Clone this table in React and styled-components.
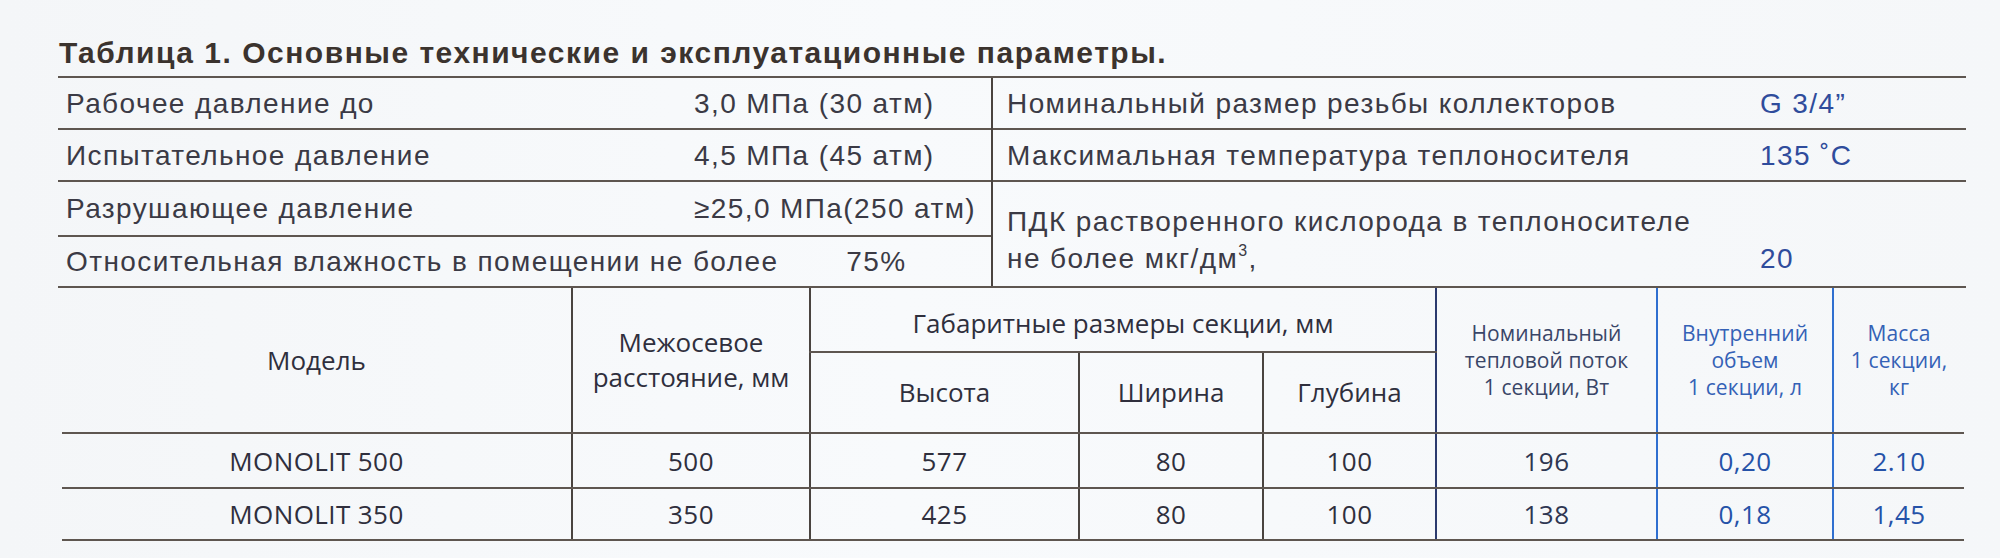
import React from 'react'
import styled, { createGlobalStyle } from 'styled-components'

const GlobalStyle = createGlobalStyle`
    html, body {
        margin: 0;
        padding: 0;
        background: #f6f8fa;
    }
`

const Sheet = styled.div`
    width: 2000px;
    height: 558px;
    box-sizing: border-box;
    padding: 35px 0 0 58px;
    background: linear-gradient(90deg, #f4f6f8 0%, #f8fafc 45%, #f5f7f9 100%);
    overflow: hidden;
`

const Title = styled.h2`
    margin: 0 0 5px 1px;
    font-family: 'Liberation Sans', Arial, sans-serif;
    font-weight: 700;
    font-size: 30px;
    line-height: 36px;
    letter-spacing: 1.5px;
    color: #3b332e;
`

const Params = styled.div`
    display: flex;
    width: 1908px;
    border-top: 2px solid #5e5650;
    border-bottom: 2px solid #5e5650;
`

const ParamColumn = styled.div`
    display: flex;
    flex-direction: column;
    width: ${p => p.$width}px;
    border-left: ${p => (p.$divided ? '2px solid #4a4440' : 'none')};
`

const ParamRow = styled.div`
    display: flex;
    align-items: ${p => (p.$bottom ? 'flex-end' : 'center')};
    box-sizing: border-box;
    height: ${p => p.$height}px;
    padding-left: ${p => p.$indent}px;
    padding-bottom: ${p => (p.$bottom ? 9 : 0)}px;
    border-bottom: ${p => (p.$last ? 'none' : '2px solid #5e5650')};
    font-family: 'Liberation Sans', Arial, sans-serif;
    font-size: 28px;
    line-height: 37px;
    letter-spacing: 1.4px;
    color: #3b3a45;
`

const ParamLabel = styled.div`
    flex: none;
    width: ${p => (p.$width ? `${p.$width}px` : 'auto')};
    white-space: nowrap;
`

const ParamValue = styled.div`
    flex: none;
    padding-left: ${p => p.$pad || 0}px;
    white-space: nowrap;
    color: ${p => (p.$accent ? '#2f4c9c' : 'inherit')};
`

const Sup = styled.sup`
    font-size: 16px;
    vertical-align: 12px;
    line-height: 0;
`

const Specs = styled.table`
    width: 1902px;
    margin-left: 4px;
    border-collapse: collapse;
    table-layout: fixed;
    font-family: 'Open Sans', 'Noto Sans', sans-serif;
    color: #2f2f3d;
`

const Head = styled.th`
    font-weight: 400;
    font-size: ${p => (p.$small ? 21 : 26)}px;
    line-height: ${p => (p.$small ? 27 : 35)}px;
    color: ${p => p.$tone || '#2f2f3d'};
    text-align: center;
    vertical-align: middle;
    padding: ${p => (p.$pushDown ? '8px 0 0' : '0')};
    border-left: ${p => (p.$edge ? `2px solid ${p.$edge}` : 'none')};
    border-bottom: 2px solid #5e5650;
    letter-spacing: ${p => (p.$small ? '0.1px' : '0')};
`

const HeadRow = styled.tr`
    height: ${p => p.$height}px;
`

const Cell = styled.td`
    font-size: 26px;
    line-height: 30px;
    color: ${p => p.$tone || '#2f2f3d'};
    text-align: center;
    vertical-align: middle;
    padding: 0;
    border-left: ${p => (p.$edge ? `2px solid ${p.$edge}` : 'none')};
    border-bottom: 2px solid #5e5650;
    letter-spacing: 0.4px;
`

const DataRow = styled.tr`
    height: ${p => p.$height}px;
`

const leftParams = [
    { label: 'Рабочее давление до', value: '3,0 МПа (30 атм)', height: 52 },
    { label: 'Испытательное давление', value: '4,5 МПа (45 атм)', height: 52 },
    { label: 'Разрушающее давление', value: '≥25,0 МПа(250 атм)', height: 55 },
    { label: 'Относительная влажность в помещении не более', value: '75%', height: 49, pad: 68 },
]

const GRAY = '#4a4440'
const NAVY = '#2b3a6e'
const BLUE = '#2f6fd0'

const columns = [510, 238, 269, 184, 173, 221, 176, 131]

const models = [
    { name: 'MONOLIT 500', axis: '500', height: '577', width: '80', depth: '100', power: '196', volume: '0,20', mass: '2.10', rowHeight: 55 },
    { name: 'MONOLIT 350', axis: '350', height: '425', width: '80', depth: '100', power: '138', volume: '0,18', mass: '1,45', rowHeight: 52 },
]

const App = () => (
    <Sheet>
        <GlobalStyle />
        <Title>Таблица 1. Основные технические и эксплуатационные параметры.</Title>
        <Params>
            <ParamColumn $width={934}>
                {leftParams.map((row, i) => (
                    <ParamRow key={row.label} $height={row.height} $indent={8} $last={i === leftParams.length - 1}>
                        <ParamLabel $width={row.pad ? 0 : 628}>{row.label}</ParamLabel>
                        <ParamValue $pad={row.pad}>{row.value}</ParamValue>
                    </ParamRow>
                ))}
            </ParamColumn>
            <ParamColumn $width={974} $divided>
                <ParamRow $height={52} $indent={14}>
                    <ParamLabel $width={753}>Номинальный размер резьбы коллекторов</ParamLabel>
                    <ParamValue $accent>G 3/4”</ParamValue>
                </ParamRow>
                <ParamRow $height={52} $indent={14}>
                    <ParamLabel $width={753}>Максимальная температура теплоносителя</ParamLabel>
                    <ParamValue $accent>135 ˚C</ParamValue>
                </ParamRow>
                <ParamRow $height={104} $indent={14} $bottom $last>
                    <ParamLabel $width={753}>
                        ПДК растворенного кислорода в теплоносителе
                        <br />
                        не более мкг/дм<Sup>3</Sup>,
                    </ParamLabel>
                    <ParamValue $accent>20</ParamValue>
                </ParamRow>
            </ParamColumn>
        </Params>
        <Specs>
            <colgroup>
                {columns.map((w, i) => (
                    <col key={i} style={{ width: w }} />
                ))}
            </colgroup>
            <thead>
                <HeadRow $height={64}>
                    <Head rowSpan={2}>Модель</Head>
                    <Head rowSpan={2} $edge={GRAY}>
                        Межосевое
                        <br />
                        расстояние, мм
                    </Head>
                    <Head colSpan={3} $edge={GRAY} $pushDown>
                        Габаритные размеры секции, мм
                    </Head>
                    <Head rowSpan={2} $edge={NAVY} $small $tone="#3a4668">
                        Номинальный
                        <br />
                        тепловой поток
                        <br />1 секции, Вт
                    </Head>
                    <Head rowSpan={2} $edge={BLUE} $small $tone="#3461b6">
                        Внутренний
                        <br />
                        объем
                        <br />1 секции, л
                    </Head>
                    <Head rowSpan={2} $edge={BLUE} $small $tone="#3461b6">
                        Масса
                        <br />1 секции,
                        <br />
                        кг
                    </Head>
                </HeadRow>
                <HeadRow $height={81}>
                    <Head $edge={GRAY}>Высота</Head>
                    <Head $edge={GRAY}>Ширина</Head>
                    <Head $edge={GRAY}>Глубина</Head>
                </HeadRow>
            </thead>
            <tbody>
                {models.map(m => (
                    <DataRow key={m.name} $height={m.rowHeight}>
                        <Cell>{m.name}</Cell>
                        <Cell $edge={GRAY}>{m.axis}</Cell>
                        <Cell $edge={GRAY}>{m.height}</Cell>
                        <Cell $edge={GRAY}>{m.width}</Cell>
                        <Cell $edge={GRAY}>{m.depth}</Cell>
                        <Cell $edge={NAVY} $tone="#2e3652">
                            {m.power}
                        </Cell>
                        <Cell $edge={BLUE} $tone="#2552a8">
                            {m.volume}
                        </Cell>
                        <Cell $edge={BLUE} $tone="#2552a8">
                            {m.mass}
                        </Cell>
                    </DataRow>
                ))}
            </tbody>
        </Specs>
    </Sheet>
)

export default App
